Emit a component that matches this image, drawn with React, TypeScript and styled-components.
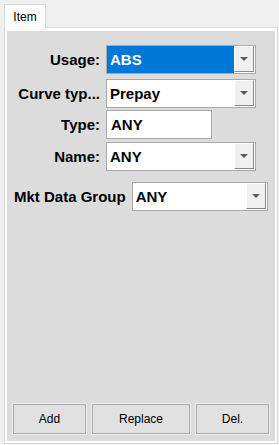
import React from 'react';
import styled, { createGlobalStyle } from 'styled-components';

const GlobalStyle = createGlobalStyle`
  html, body {
    margin: 0;
    padding: 0;
    background: #f0f0f0;
    font-family: "Liberation Sans", Arial, sans-serif;
  }
  * {
    box-sizing: border-box;
  }
`;

const Frame = styled.div`
  height: 100vh;
  display: flex;
  flex-direction: column;
  padding: 4px 1px 1px 4px;
`;

const TabStrip = styled.div`
  display: flex;
  height: 24px;
`;

const Tab = styled.div`
  width: 42px;
  border: 1px solid #d9d9d9;
  border-bottom: none;
  background: #ffffff;
  font-size: 12px;
  color: #000;
  display: flex;
  align-items: center;
  justify-content: center;
  padding-top: 1px;
`;

const TabFiller = styled.div`
  flex: 1;
  border-bottom: 1px solid #d9d9d9;
`;

const Panel = styled.div`
  flex: 1;
  display: flex;
  border: 1px solid #d9d9d9;
  border-top: none;
  background: #ffffff;
  padding: 3px 2px 2px 2px;
`;

const Body = styled.div`
  flex: 1;
  display: flex;
  flex-direction: column;
  background: #dcdcdc;
  padding: 14px 0 7px 0;
`;

const Row = styled.div<{ $top: number; $indent?: number }>`
  display: flex;
  align-items: center;
  gap: 6px;
  height: 29px;
  margin-top: ${(p) => p.$top}px;
  padding-left: ${(p) => p.$indent ?? 0}px;
`;

const Label = styled.div<{ $width?: number }>`
  ${(p) => (p.$width ? `width: ${p.$width}px;` : '')}
  text-align: right;
  font-size: 15px;
  font-weight: bold;
  color: #000;
  white-space: nowrap;
`;

const Combo = styled.div<{ $width: number }>`
  width: ${(p) => p.$width}px;
  height: 29px;
  display: flex;
  border: 1px solid #a9a9a9;
  background: #ffffff;
`;

const ComboValue = styled.div<{ $selected?: boolean }>`
  flex: 1;
  display: flex;
  align-items: center;
  padding-left: 3px;
  font-size: 15px;
  font-weight: bold;
  background: ${(p) => (p.$selected ? '#0078d7' : '#ffffff')};
  color: ${(p) => (p.$selected ? '#ffffff' : '#000000')};
`;

const ArrowButton = styled.div`
  width: 20px;
  margin: 0 1px 1px 0;
  display: flex;
  align-items: center;
  justify-content: center;
  background: #f0f0f0;
  border-top: 1px solid #ffffff;
  border-left: 1px solid #ffffff;
  border-right: 1px solid #8a8a8a;
  border-bottom: 1px solid #8a8a8a;
`;

const Arrow = styled.div`
  width: 0;
  height: 0;
  border-left: 4px solid transparent;
  border-right: 4px solid transparent;
  border-top: 4px solid #5a5a5a;
`;

const TextField = styled.div<{ $width: number }>`
  width: ${(p) => p.$width}px;
  height: 29px;
  display: flex;
  align-items: center;
  padding-left: 4px;
  border: 1px solid #a9a9a9;
  background: #ffffff;
  font-size: 15px;
  font-weight: bold;
  color: #000;
`;

const ButtonBar = styled.div`
  margin-top: auto;
  display: flex;
  gap: 6px;
  padding: 0 5px 0 6px;
`;

const Button = styled.button<{ $width: number }>`
  width: ${(p) => p.$width}px;
  height: 30px;
  border: 1px solid #adadad;
  box-shadow: 0 0 0 1px #ececec;
  background: #e1e1e1;
  font-family: "Liberation Sans", Arial, sans-serif;
  font-size: 12px;
  color: #000;
  padding: 0;
`;

const ComboBox = ({ value, width, selected }: { value: string; width: number; selected?: boolean }) => (
  <Combo $width={width}>
    <ComboValue $selected={selected}>{value}</ComboValue>
    <ArrowButton>
      <Arrow />
    </ArrowButton>
  </Combo>
);

export default function App() {
  return (
    <>
      <GlobalStyle />
      <Frame>
        <TabStrip>
          <Tab>Item</Tab>
          <TabFiller />
        </TabStrip>
        <Panel>
          <Body>
            <Row $top={0}>
              <Label $width={93}>Usage:</Label>
              <ComboBox value="ABS" width={150} selected />
            </Row>
            <Row $top={5}>
              <Label $width={93}>Curve typ...</Label>
              <ComboBox value="Prepay" width={150} />
            </Row>
            <Row $top={2}>
              <Label $width={93}>Type:</Label>
              <TextField $width={106}>ANY</TextField>
            </Row>
            <Row $top={3}>
              <Label $width={93}>Name:</Label>
              <ComboBox value="ANY" width={150} />
            </Row>
            <Row $top={11} $indent={7}>
              <Label>Mkt Data Group</Label>
              <ComboBox value="ANY" width={136} />
            </Row>
            <ButtonBar>
              <Button $width={73}>Add</Button>
              <Button $width={98}>Replace</Button>
              <Button $width={73}>Del.</Button>
            </ButtonBar>
          </Body>
        </Panel>
      </Frame>
    </>
  );
}
